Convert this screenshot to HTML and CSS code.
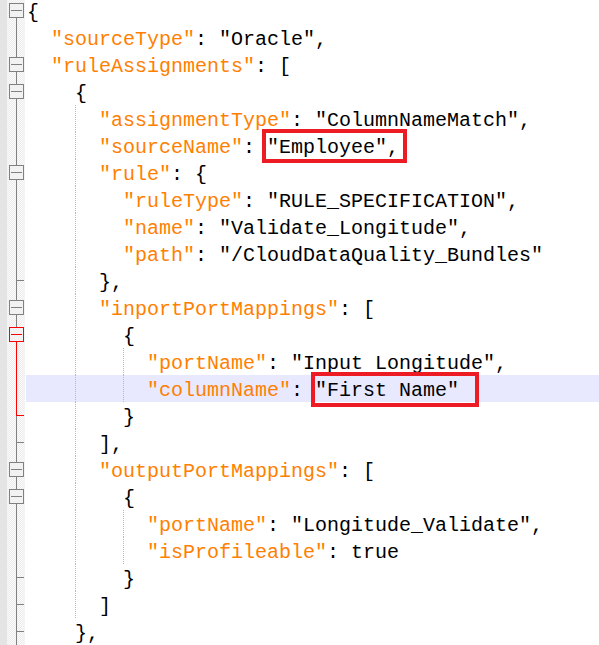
FILE: index.html
```html
<!DOCTYPE html>
<html lang="en">
<head>
  <meta charset="UTF-8">
  <title>rule.json - Notepad++</title>
  <link rel="stylesheet" href="styles.css">
</head>
<body>

<!-- fold margin markers -->
<svg class="defs" width="0" height="0">
  <symbol id="f-first" viewBox="0 0 18 27">
    <path d="M9.5 21V27" stroke="#808080"/>
    <rect x="2.5" y="6.5" width="14" height="14" fill="#f2f2f2" stroke="#808080"/>
    <path d="M4 13.5H15" stroke="#808080"/>
  </symbol>
  <symbol id="f-box" viewBox="0 0 18 27">
    <path d="M9.5 0V6M9.5 21V27" stroke="#808080"/>
    <rect x="2.5" y="6.5" width="14" height="14" fill="#f2f2f2" stroke="#808080"/>
    <path d="M4 13.5H15" stroke="#808080"/>
  </symbol>
  <symbol id="f-line" viewBox="0 0 18 27">
    <path d="M9.5 0V27" stroke="#808080"/>
  </symbol>
  <symbol id="f-tick" viewBox="0 0 18 27">
    <path d="M9.5 0V27M9.5 13.5H17" stroke="#808080"/>
  </symbol>
  <symbol id="f-box-red" viewBox="0 0 18 27">
    <path d="M9.5 0V6" stroke="#808080"/>
    <path d="M9.5 21V27" stroke="#ff0000"/>
    <rect x="2.5" y="6.5" width="14" height="14" fill="#f2f2f2" stroke="#ff0000"/>
    <path d="M4 13.5H15" stroke="#ff0000"/>
  </symbol>
  <symbol id="f-line-red" viewBox="0 0 18 27">
    <path d="M9.5 0V27" stroke="#ff0000"/>
  </symbol>
  <symbol id="f-tick-red" viewBox="0 0 18 27">
    <path d="M9.5 14V27" stroke="#808080"/>
    <path d="M9.5 0V14M9.5 13.5H17" stroke="#ff0000"/>
  </symbol>
</svg>

<div class="editor">
  <div class="margin"></div>

  <div class="folds">
    <svg class="fold"><use href="#f-first"/></svg>
    <svg class="fold"><use href="#f-line"/></svg>
    <svg class="fold"><use href="#f-box"/></svg>
    <svg class="fold"><use href="#f-box"/></svg>
    <svg class="fold"><use href="#f-line"/></svg>
    <svg class="fold"><use href="#f-line"/></svg>
    <svg class="fold"><use href="#f-box"/></svg>
    <svg class="fold"><use href="#f-line"/></svg>
    <svg class="fold"><use href="#f-line"/></svg>
    <svg class="fold"><use href="#f-line"/></svg>
    <svg class="fold"><use href="#f-tick"/></svg>
    <svg class="fold"><use href="#f-box"/></svg>
    <svg class="fold"><use href="#f-box-red"/></svg>
    <svg class="fold"><use href="#f-line-red"/></svg>
    <svg class="fold"><use href="#f-line-red"/></svg>
    <svg class="fold"><use href="#f-tick-red"/></svg>
    <svg class="fold"><use href="#f-tick"/></svg>
    <svg class="fold"><use href="#f-box"/></svg>
    <svg class="fold"><use href="#f-box"/></svg>
    <svg class="fold"><use href="#f-line"/></svg>
    <svg class="fold"><use href="#f-line"/></svg>
    <svg class="fold"><use href="#f-tick"/></svg>
    <svg class="fold"><use href="#f-tick"/></svg>
    <svg class="fold"><use href="#f-tick"/></svg>
  </div>

  <div class="code">
    <div class="line">{</div>
    <div class="line">  <span class="k">"sourceType"</span>: "Oracle",</div>
    <div class="line">  <span class="k">"ruleAssignments"</span>: [</div>
    <div class="line">    {</div>
    <div class="line g1">      <span class="k">"assignmentType"</span>: "ColumnNameMatch",</div>
    <div class="line g1">      <span class="k">"sourceName"</span>: <span class="note note-1">"Employee",</span></div>
    <div class="line g1">      <span class="k">"rule"</span>: {</div>
    <div class="line g1">        <span class="k">"ruleType"</span>: "RULE_SPECIFICATION",</div>
    <div class="line g1">        <span class="k">"name"</span>: "Validate_Longitude",</div>
    <div class="line g1">        <span class="k">"path"</span>: "/CloudDataQuality_Bundles"</div>
    <div class="line g1">      },</div>
    <div class="line g1">      <span class="k">"inportPortMappings"</span>: [</div>
    <div class="line g1">        {</div>
    <div class="line g2">          <span class="k">"portName"</span>: "Input Longitude",</div>
    <div class="line g2 cur">          <span class="k">"columnName"</span>: <span class="note note-2">"First Name"</span></div>
    <div class="line g1">        }</div>
    <div class="line g1">      ],</div>
    <div class="line g1">      <span class="k">"outputPortMappings"</span>: [</div>
    <div class="line g1">        {</div>
    <div class="line g2">          <span class="k">"portName"</span>: "Longitude_Validate",</div>
    <div class="line g2">          <span class="k">"isProfileable"</span>: true</div>
    <div class="line g1">        }</div>
    <div class="line g1">      ]</div>
    <div class="line">    },</div>
  </div>
</div>

</body>
</html>
```

FILE: styles.css
```css
body {
  margin: 0;
  background: #ffffff;
  overflow: hidden;
}

.defs {
  position: absolute;
  width: 0;
  height: 0;
}

.editor {
  display: flex;
  margin-top: -3px;
  height: 648px;
  font-family: "Liberation Mono", "Courier New", monospace;
  font-size: 20px;
}

/* grey strip on the far left */
.margin {
  flex: none;
  width: 7px;
  background: #e4e4e4;
}

/* checkered fold margin */
.folds {
  flex: none;
  width: 18px;
  display: flex;
  flex-direction: column;
  background: repeating-conic-gradient(#ececec 0 25%, #fbfbfb 0 50%) 0 0 / 2px 2px;
}

.fold {
  display: block;
  flex: none;
  width: 18px;
  height: 27px;
}

.code {
  flex: 1;
  padding-left: 1px;
}

.line {
  box-sizing: border-box;
  height: 27px;
  padding-top: 3px;
  padding-left: 1px;
  line-height: 25px;
  white-space: pre;
  color: #000000;
}

.k {
  color: #ff8000;
}

/* indent guides */
.g1 {
  background: repeating-linear-gradient(#b8b8b8 0 1px, transparent 1px 2px) 49px 0 / 1px 100% no-repeat;
}

.g2 {
  background:
    repeating-linear-gradient(#b8b8b8 0 1px, transparent 1px 2px) 49px 0 / 1px 100% no-repeat,
    repeating-linear-gradient(#b8b8b8 0 1px, transparent 1px 2px) 97px 0 / 1px 100% no-repeat;
}

.cur {
  background-color: #e8e8ff;
}

/* red annotation boxes */
.note {
  display: inline-block;
  position: relative;
  height: 25px;
}

.note::after {
  content: "";
  position: absolute;
  border: 4px solid #ed1c24;
}

.note-1::after {
  left: -5px;
  right: -8px;
  top: -6px;
  bottom: -3px;
}

.note-2::after {
  left: -4px;
  right: -20px;
  top: -6px;
  bottom: -4px;
}
```
